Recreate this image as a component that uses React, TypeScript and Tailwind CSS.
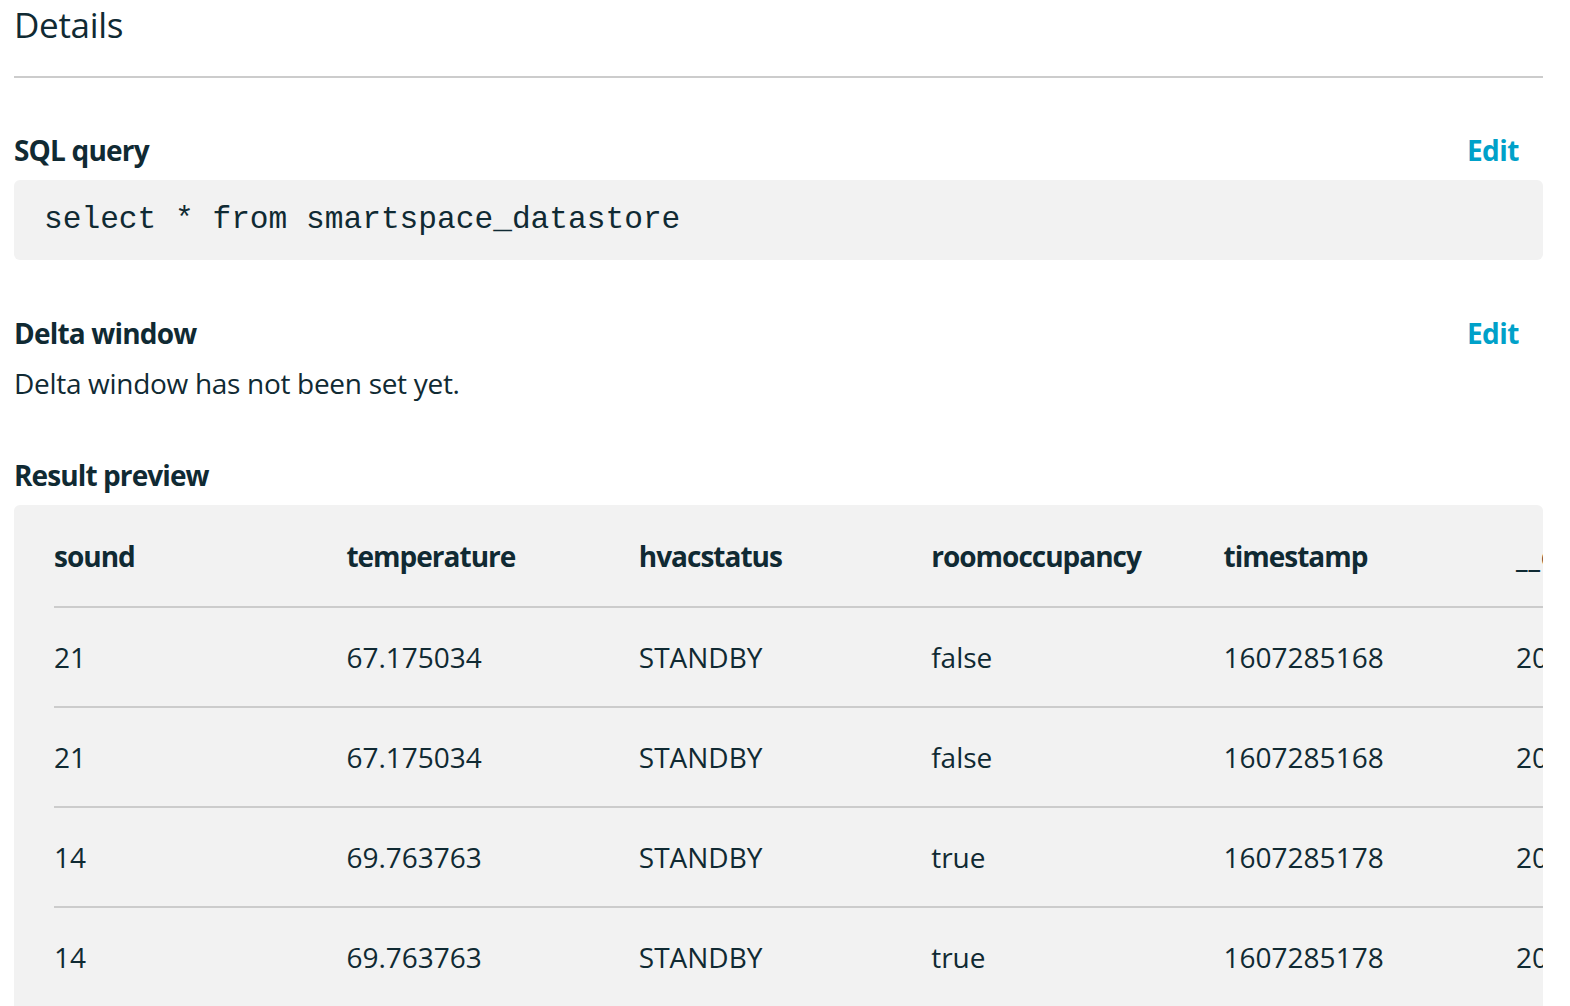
import React from "react";

const headers = ["sound", "temperature", "hvacstatus", "roomoccupancy", "timestamp", "__dt"];
const rows = [
  ["21", "67.175034", "STANDBY", "false", "1607285168", "2020-12-06 00:00:00.000"],
  ["21", "67.175034", "STANDBY", "false", "1607285168", "2020-12-06 00:00:00.000"],
  ["14", "69.763763", "STANDBY", "true", "1607285178", "2020-12-06 00:00:00.000"],
  ["14", "69.763763", "STANDBY", "true", "1607285178", "2020-12-06 00:00:00.000"],
  ["14", "69.763763", "STANDBY", "true", "1607285178", "2020-12-06 00:00:00.000"],
];

export default function App() {
  return (
    <div className="h-[1006px] w-[1570px] overflow-hidden bg-white pl-[14px] pr-[27px] text-[#102a33] [font-family:'Open_Sans',sans-serif]">
      <h2 className="pt-[1px] text-[35px] leading-[47px] font-normal tracking-[-0.3px]">Details</h2>
      <div className="mt-[28px] h-[2px] bg-[#cccccc]" />

      <div className="mt-[52px] flex items-center justify-between">
        <div className="text-[28px] leading-[40px] font-bold tracking-[-0.8px]">SQL query</div>
        <div className="pr-[24px] text-[28px] leading-[40px] font-bold tracking-[-0.5px] text-[#00a1c9]">Edit</div>
      </div>
      <div className="mt-[10px] flex h-[80px] items-center rounded-[6px] bg-[#f2f2f2] px-[30px]">
        <code className="text-[31.2px] leading-[40px] [font-family:'Liberation_Mono',monospace]">
          select * from smartspace_datastore
        </code>
      </div>

      <div className="mt-[53px] flex items-center justify-between">
        <div className="text-[28px] leading-[40px] font-bold tracking-[-0.8px]">Delta window</div>
        <div className="pr-[24px] text-[28px] leading-[40px] font-bold tracking-[-0.5px] text-[#00a1c9]">Edit</div>
      </div>
      <div className="mt-[10px] text-[28px] leading-[40px] tracking-[-0.3px]">Delta window has not been set yet.</div>

      <div className="mt-[52px] text-[28px] leading-[40px] font-bold tracking-[-0.9px]">Result preview</div>
      <div className="mt-[10px] overflow-hidden rounded-t-[6px] bg-[#f2f2f2] pl-[40px]">
        <div className="w-[2100px]">
          <div className="grid h-[101px] grid-cols-[repeat(6,292.4px)] items-center">
            {headers.map((h, j) => (
              <div
                key={h}
                className={
                  j === 5
                    ? "text-[28px] leading-[40px] font-bold whitespace-nowrap tracking-[1px]"
                    : "text-[28px] leading-[40px] font-bold whitespace-nowrap tracking-[-1px]"
                }
              >
                {h}
              </div>
            ))}
          </div>
          {rows.map((r, i) => (
            <div
              key={i}
              className="grid h-[100px] grid-cols-[repeat(6,292.4px)] items-center border-t-2 border-[#cccccc]"
            >
              {r.map((c, j) => (
                <div key={j} className="text-[28px] leading-[40px] whitespace-nowrap">
                  {c}
                </div>
              ))}
            </div>
          ))}
        </div>
      </div>
    </div>
  );
}
